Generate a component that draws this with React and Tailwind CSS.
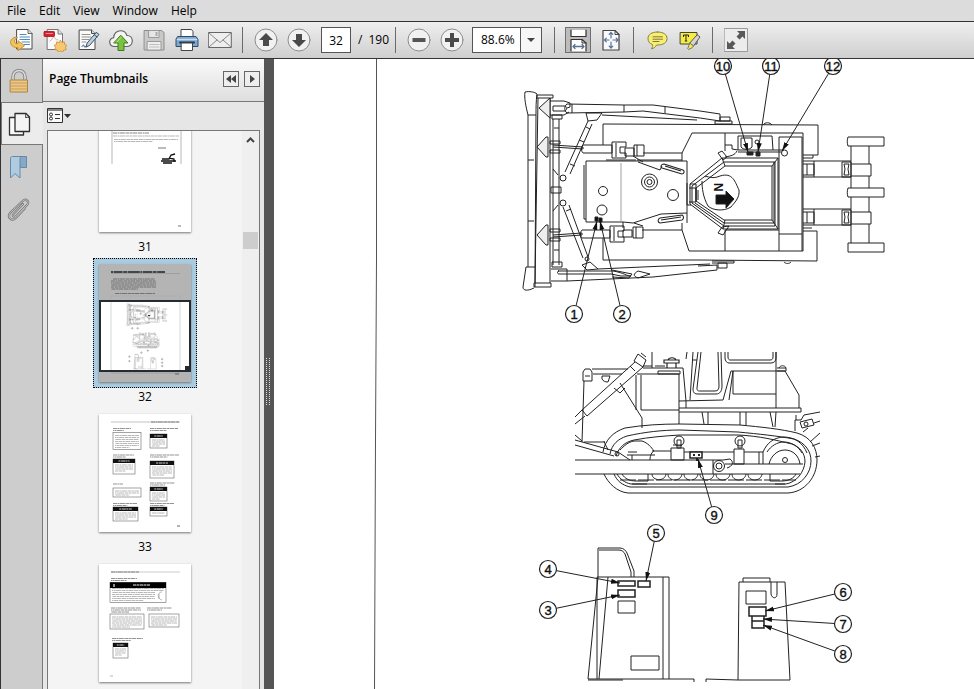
import { useState } from "react";

const MENUS = ["File", "Edit", "View", "Window", "Help"];

const Icon = ({ children, className = "h-6 w-6" }) => (
  <svg viewBox="0 0 24 24" className={className} fill="none" strokeLinecap="round" strokeLinejoin="round" aria-hidden="true">
    {children}
  </svg>
);

const OpenIcon = () => (
  <Icon>
    <path d="M7 1.500h11l4 4v15.500H7z" fill="#fff" stroke="#4b4b4b" />
    <path d="M18 1.500v4h4" fill="#ddd" stroke="#4b4b4b" strokeWidth=".8" />
    <path d="M10 6.500h6M10 9h9.500M10 11.500h9.500M12 14h7.500M14 16.500h5.500" stroke="#4a8db8" strokeWidth="1.200" />
    <path d="M6.500 9C2 9.500 0 12.500.7 15.500c.7 3 4.300 4.300 7.300 4.200v3l6.500-5-6.500-5v3c-2 0-3.600-.6-3.600-2.400 0-1.500 1-2.800 2.600-3.300z" fill="#f5c35b" stroke="#b98324" strokeWidth=".8" />
  </Icon>
);

const CreateIcon = () => (
  <Icon>
    <path d="M4.500 1.500H15l4.500 4.500v15.500h-15z" fill="#fafafa" stroke="#777" />
    <path d="M15 1.500V6h4.500" fill="#ddd" stroke="#777" />
    <path d="M7 13c2-1 3-3 3.500-5 1 2 2 4 4.500 4" stroke="#d9a9a9" />
    <rect x="1" y="3.500" width="10.500" height="5" rx=".8" fill="#d8202f" stroke="#9c1420" strokeWidth=".8" />
    <path d="M3 5.500h6.500" stroke="#f28a92" />
    <path d="m17.500 12.500 1.500 2 2.400-.6.200 2.400 2.200 1-1.300 2.100.7 2.300-2.500.3-1 2.200-2.200-1.200-2.200 1.200-1-2.200-2.500-.3.700-2.300-1.300-2.100 2.300-1 .1-2.400 2.400.6z" fill="#f5c871" stroke="#c48f35" strokeWidth=".8" />
  </Icon>
);

const SignIcon = () => (
  <Icon>
    <path d="M3.500 2h12l3.500 3.500v16H3.500z" fill="#fafafa" stroke="#4b4b4b" />
    <path d="M15.500 2v3.500H19" fill="#ddd" stroke="#4b4b4b" />
    <path d="M6 6.500h8M6 9h9M6 11.500h7M6 14h4" stroke="#888" strokeWidth=".9" />
    <path d="M6 18.500c1-2 2-2 2-.5s1.500 1 3 .5" stroke="#335b86" />
    <path d="m20.500 4.500 2.500 2-9.500 11-3.500 1.500 1-3.500z" fill="#bcd0e2" stroke="#3c4f62" />
    <path d="m18.500 7 2.500 2" stroke="#3c4f62" />
  </Icon>
);

const CloudIcon = () => (
  <Icon>
    <path d="M6 18.500C2.500 18.500.7 16.500.7 14c0-2.300 1.700-4 4-4.300C4.700 5.500 7.700 2.700 11.500 2.700c3.200 0 5.600 1.900 6.400 4.800 3 0 5.400 2.200 5.400 5.300 0 3.200-2.200 5.700-5.300 5.700z" fill="#f4f4f4" stroke="#5c5c5c" strokeWidth="1.100" />
    <path d="M12 7.500 19 15h-4v7.500H9V15H5z" fill="#7cc242" stroke="#3f7d1c" />
    <path d="M12 9.500 8 14" stroke="#b9e38f" />
  </Icon>
);

const SaveIcon = () => (
  <Icon>
    <path d="M2.500 2.500h17l2.500 2v17.500H2.500z" fill="#c9c9c9" stroke="#8b8b8b" />
    <path d="M7 2.500h10v7H7z" fill="#e6e6e6" stroke="#999" />
    <path d="M13.500 4h2v4h-2z" fill="#aaa" />
    <path d="M5.500 13.500h13.500V22H5.500z" fill="#efefef" stroke="#999" />
    <path d="M7.500 16.500h9.500M7.500 19h9.500" stroke="#bdbdbd" />
  </Icon>
);

const PrintIcon = () => (
  <Icon>
    <path d="M6 9V1.500h10.500l1.500 2V9z" fill="#fff" stroke="#444" />
    <path d="M3 8.500h18l2 3v7H1v-7z" fill="#7fa8cf" stroke="#2f4d6b" />
    <path d="M2.500 11.500h19" stroke="#c7dcef" strokeWidth="1.500" />
    <path d="M5 14.500h14" stroke="#24384c" strokeWidth="2" />
    <path d="M6.500 15h11v7.500h-11z" fill="#fff" stroke="#444" />
  </Icon>
);

const MailIcon = () => (
  <Icon>
    <path d="M.7 4.500h22.600v15H.7z" fill="#eee" stroke="#666" />
    <path d="m1 5 11 9.500L23 5M1 19l8-7M23 19l-8-7" stroke="#888" />
  </Icon>
);

const RoundIcon = ({ children }) => (
  <Icon>
    <circle cx="12" cy="12" r="11" fill="#f1f1f1" stroke="#8d8d8d" />
    {children}
  </Icon>
);

const FitWidthIcon = () => (
  <Icon>
    <path d="M5 2v6.500h15V2" fill="#fff" stroke="#333" strokeWidth="1.200" />
    <path d="M5 23V11.500h11L20 15v8" fill="#fff" stroke="#333" strokeWidth="1.200" />
    <path d="M16 11.500V15h4" stroke="#333" />
    <path d="M7 18.500h11M9 16.500l-2 2 2 2M16 16.500l2 2-2 2" stroke="#5b7193" strokeWidth="1.300" />
  </Icon>
);

const FitPageIcon = () => (
  <Icon>
    <path d="M4 2.500h12l4 4v15.500H4z" fill="#f7f9fc" stroke="#444" strokeWidth="1.200" />
    <path d="M16 2.500v4h4" stroke="#444" />
    <path d="M12 4.500V10M12 14v6M5.500 12H10M14 12h5M10.200 6.300 12 4.500l1.800 1.800M10.200 18.200 12 20l1.800-1.800M7.300 10.200 5.500 12l1.800 1.800M17.200 10.200 19 12l-1.800 1.800" stroke="#5b7193" strokeWidth="1.200" />
  </Icon>
);

const CommentIcon = () => (
  <Icon>
    <path d="M12.500 4c6 0 9.500 2.500 9.500 6.500S18.500 17 12.500 17l-1 0c-1 2-2.500 3.300-5 3.800 1-1.300 1.300-2.800 1-4.300C4.500 15.500 3 13.500 3 10.500 3 6.500 6.500 4 12.500 4z" fill="#f8ef72" stroke="#85803f" />
    <path d="M8 8.800h9.500M8 11.200h9.500M8 13.500h6" stroke="#6e6a35" strokeWidth=".9" />
  </Icon>
);

const HighlightIcon = () => (
  <Icon>
    <path d="M2.500 4.500H19V16H2.500z" fill="#f7ed3f" stroke="#444" />
    <path d="M5.500 9V7h5v2M8 7v6M6.800 13h2.400" stroke="#222" strokeLinecap="butt" />
    <path d="m19.500 7 2.500 2-6.500 9-3.500-2.700z" fill="#d4d4d4" stroke="#555" />
    <path d="m12 15.300 3.500 2.700-1.500 1.800-3.500 1.700-.5-.5z" fill="#f7ed3f" stroke="#777" />
  </Icon>
);

const ExpandIcon = () => (
  <Icon>
    <path d="M.5.500h23v23H.5z" fill="#ececec" stroke="#9a9a9a" />
    <path d="M21 3v8l-2.500-2.500-3 3-3-3 3-3L13 3zM3 21v-8l2.500 2.500 3-3 3 3-3 3L11 21z" fill="#585858" />
  </Icon>
);

const LockIcon = () => (
  <Icon>
    <path d="M6 12V7.500a6 6 0 0 1 12 0V12" stroke="#858585" strokeWidth="3.400" strokeLinecap="butt" />
    <path d="M6 12V7.500a6 6 0 0 1 12 0V12" stroke="#dcdcdc" strokeWidth="1.600" strokeLinecap="butt" />
    <path d="M3.500 11h17v12h-17z" fill="#ecc886" stroke="#a88345" />
    <path d="M4 14h16M4 17h16M4 20h16" stroke="#c89c55" />
  </Icon>
);

const PagesIcon = () => (
  <Icon>
    <path d="M1.500 5.500h14V23h-14z" fill="#fafafa" stroke="#2f2f2f" strokeWidth="1.300" />
    <path d="M7 1.500h11l3.500 3.500v14.500H7z" fill="#f4f4f4" stroke="#2f2f2f" strokeWidth="1.300" />
    <path d="M17.500 1.500c.5 2 0 3 0 4 1-.4 2.500-.4 4 0" stroke="#2f2f2f" />
  </Icon>
);

const BookmarkIcon = () => (
  <Icon>
    <path d="M12 1.500h7.500v11H14z" fill="#86a9c7" stroke="#6889a6" />
    <path d="M14.500 1.500H5.500c-1.500 0-2 .7-2 2V23L8 18.500l5 4.500V4c0-1.500.5-2.500 1.500-2.500z" fill="#afcbe1" stroke="#6889a6" />
  </Icon>
);

const ClipIcon = () => (
  <Icon>
    <path d="M16 6 6.500 16c-1.700 2 .8 4 2.500 2.300L20 7c3-3.500-1-7-4.300-4L3.500 14.500c-4 4.500 1 9.500 5.300 5.500l9-9.500" stroke="#777" strokeWidth="2.200" />
    <path d="M16 6 6.500 16c-1.700 2 .8 4 2.500 2.300L20 7c3-3.500-1-7-4.300-4L3.500 14.500c-4 4.500 1 9.500 5.300 5.500l9-9.500" stroke="#d5d5d5" strokeWidth=".8" />
  </Icon>
);

const FILE_TOOLS = [
  { label: "Open", icon: OpenIcon },
  { label: "Create", icon: CreateIcon },
  { label: "Sign", icon: SignIcon },
  { label: "Upload", icon: CloudIcon },
  { label: "Save", icon: SaveIcon },
  { label: "Print", icon: PrintIcon },
  { label: "Email", icon: MailIcon },
];

const ToolButton = ({ label, active, onClick, children }) => (
  <button type="button" aria-label={label} onClick={onClick} className="flex h-7 w-[33px] shrink-0 items-center justify-center">
    <span className={active ? "border border-[#6f6f6f] bg-[#bcbcbc]" : ""}>{children}</span>
  </button>
);

const Separator = () => <div className="mx-1.5 h-[26px] w-px shrink-0 bg-[#6a6a6a]" />;

const Toolbar = ({ page, setPage }) => {
  const [fit, setFit] = useState("width");

  return (
    <div className="flex h-[38px] shrink-0 items-center border-y border-[#333] bg-linear-to-b from-[#efefef] to-[#cfcfcf] pl-[5px]">
      {FILE_TOOLS.map(({ label, icon: ToolIcon }) => (
        <ToolButton key={label} label={label}>
          <ToolIcon />
        </ToolButton>
      ))}
      <Separator />
      <ToolButton label="Previous page" onClick={() => setPage(Math.max(1, page - 1))}>
        <RoundIcon>
          <path d="m12 5 7 7h-4v6H9v-6H5z" fill="#4a4a4a" />
        </RoundIcon>
      </ToolButton>
      <ToolButton label="Next page" onClick={() => setPage(Math.min(190, page + 1))}>
        <RoundIcon>
          <path d="m12 19 7-7h-4V6H9v6H5z" fill="#4a4a4a" />
        </RoundIcon>
      </ToolButton>
      <input
        aria-label="Page number"
        value={page}
        onChange={e => setPage(Number(e.target.value) || 1)}
        className="ml-1.5 h-[26px] w-[30px] shrink-0 border border-[#555] bg-white text-center"
      />
      <span className="flex w-[38px] shrink-0 justify-between pl-[7px]">
        <span>/</span>
        <span>190</span>
      </span>
      <Separator />
      <ToolButton label="Zoom out">
        <RoundIcon>
          <path d="M5.500 10h13v4h-13z" fill="#555" />
        </RoundIcon>
      </ToolButton>
      <ToolButton label="Zoom in">
        <RoundIcon>
          <path d="M10 5h4v5h5v4h-5v5h-4v-5H5v-4h5z" fill="#4a4a4a" />
        </RoundIcon>
      </ToolButton>
      <div className="relative mr-1.5 ml-1 h-[26px] w-[70px] shrink-0 border border-[#555] bg-white">
        <select aria-label="Zoom level" defaultValue="88.6%" className="h-full w-full appearance-none pl-2 text-black">
          <option>50%</option>
          <option>88.6%</option>
          <option>100%</option>
        </select>
        <span className="pointer-events-none absolute inset-y-0 right-0 flex w-[21px] items-center justify-center border-l border-[#555] bg-[#f6f6f6]">
          <svg viewBox="0 0 8 4" className="h-1 w-2" aria-hidden="true">
            <path d="M0 0h8L4 4z" fill="#444" />
          </svg>
        </span>
      </div>
      <Separator />
      <ToolButton label="Fit width" active={fit === "width"} onClick={() => setFit("width")}>
        <FitWidthIcon />
      </ToolButton>
      <ToolButton label="Fit page" active={fit === "page"} onClick={() => setFit("page")}>
        <FitPageIcon />
      </ToolButton>
      <Separator />
      <ToolButton label="Add comment">
        <CommentIcon />
      </ToolButton>
      <ToolButton label="Highlight text">
        <HighlightIcon />
      </ToolButton>
      <Separator />
      <ToolButton label="Read mode">
        <ExpandIcon />
      </ToolButton>
    </div>
  );
};

const RailButton = ({ label, active, children }) => (
  <button
    type="button"
    aria-label={label}
    className={`flex h-[43px] w-full items-center pl-1.5 ${
      active ? "border-y border-l border-[#777] bg-[#ececec]" : "border-r border-[#777]"
    }`}
  >
    {children}
  </button>
);

const NavRail = () => (
  <nav className="flex w-[43px] shrink-0 flex-col border-l border-[#333] bg-[#cdcdcd]">
    <RailButton label="Security settings">
      <LockIcon />
    </RailButton>
    <RailButton label="Page thumbnails" active>
      <PagesIcon />
    </RailButton>
    <RailButton label="Bookmarks">
      <BookmarkIcon />
    </RailButton>
    <RailButton label="Attachments">
      <ClipIcon />
    </RailButton>
    <div className="flex-1 border-r border-[#777]" />
  </nav>
);

// Linework of the three machine views: plan, side elevation and the two panels
const MachineLines = () => (
  <>
    {/* blade */}
    <path d="M528 115c-2-8-4-17-3-23 4-1 10 0 12 2-1 7-1 14-1 21zM528 115v152M536 115l-1 172M528 160h6M528 221h6M526 267h9M526 267l-3 20c0 4 5 4 11 1" />
    <path d="M537 95h16v3h-16zM538 98l-3 185M550 98v185M534 283h17v4h-17z" />
    <path d="m539 108 11-10v20zM537 147l9-10h2v20h-2zM537 235l9-10h2v20h-2z" fill="#eee" />
    <path d="M553 119v146M559 119v146M552 115h10v4h-10zM552 262h10v5h-10zM551 187h10v6h-10zM553 169l5 6M553 211l5-6M554 128h5M554 250h5" />
    <path d="M550 101h14l6 2v4l-3 1M550 115h14l5-3M553 106h12c2 1 2 4 0 5h-12zM550 141h10v3h-10zM550 150h10v3h-10zM550 229h10v3h-10zM550 238h10v3h-10z" />
    {/* lift arms */}
    <path d="m567 104 57 1 29 0 47 6 20 3v7l-20-3-57-7-19 1-57 1c-3-2-3-7 0-9M624 105v7M665 107v6M602 115l95 5M720 117h10v4h-10zM715 121h17v3h-17zM572 104v9" />
    <path d="M586 113h16l-5 7-9 1zM588 121l-23 51M592 124l-22 50M586 127l4 2M570 164l5 2M579 140l5 2" />
    <circle cx="563" cy="178" r="3" />
    <circle cx="563" cy="203" r="3" />
    <path d="m563 207 20 51M569 205l19 52M566 211l5-2M582 265l8-3 8 7-11 1z" />
    <circle cx="587" cy="259" r="2" />
    <path d="M551 269h16v12h-16M598 269l112-5M567 281l86-4 64-7v-5l-19 1M558 271h55c12 2 13 5 18 5h-10l-10-2h-52c-2 0-2-3 0-3zM612 270l20 4-3 4-17-1M638 271l12 3-12 4c-5-2-5-4 0-7zM718 263h9v5h-9zM712 261h22v2h-22" />
    {/* cylinders */}
    <path d="m553 145 30 2v2l-30-2M583 145h29v8h-29c-2-2-2-6 0-8zM612 142h14v5h-6v6h6v5h-14zM616 143v14M625 148h9v8h-9zM634 145h10v11h-10zM637 145v11" />
    <path d="m553 235 29-2v2l-29 2M582 230h28v8h-28c-2-2-2-6 0-8zM610 226h14v5h-6v6h6v5h-14zM614 227v14M623 230h9v7h-9zM633 227h10v11h-10zM636 227v11" />
    {/* track frames */}
    <path d="M603 145v-21l215 1v30h-15M692 133h111M692 133l-10 20h-39M637 160h45M682 153v8M603 238v22h97l117 1v-30h-14M682 223v7l7 21h114M642 230h40M763 125c2-3 7-3 9 0M784 262c2 2 5 2 7 0M803 133v118M813 155v3h-10M812 228h-9" />
    {/* hood */}
    <path d="M586 161h101v62M586 161v61h37M584 165v54h2M623 222l10 1 28-9 26-1M638 162l22 8 2-4M606 160h30M633 156l10 6M623 222v6M634 223l9 3" />
    <path d="M621 163v58" stroke="#777" strokeWidth=".7" />
    <path d="m664 164 19 6c2 1 1 4-1 4l-20-6c-2-1-1-4 2-4zM665 166l16 5M660 218l22-3c2 1 2 4 0 5l-22 3c-3-1-2-4 0-5zM661 220l20-3" strokeWidth="1.100" />
    <circle cx="649.500" cy="182" r="8" />
    <circle cx="649.500" cy="182" r="5" />
    <circle cx="649.500" cy="182" r="2.500" />
    <circle cx="603" cy="191" r="4.500" />
    <circle cx="602" cy="210" r="5" />
    <circle cx="673" cy="195" r="5.500" />
    <path d="M595 217h3v4h-3zM599 218h3v4h-3z" fill="#111" />
    {/* cab */}
    <path d="M690 184v20l33 25h55v-71h-56zM692 186v17l32 23h51v-64h-51zM696 188v13l28 19h48v-54h-47zM698 190v10M690 184h6v18M722 158l3 8M778 158l-6 8M778 229l-6-9M723 229l2-9M774 162v61h-50l-29-20" />
    <path d="M687 183v22h4M689 188h7v14h-7M718 153l4-2 5 6-4 3zM718 233l4-6 7-1-6 9z" />
    <path d="M725 133v18M725 145h7v4l6 1M738 150v-14h34l1 14M738 150h46M738 152h44M725 157c6-1 10-2 12-6M741 138h11v9c-2 3-9 3-11 0z" />
    <circle cx="757" cy="142" r="2" />
    <circle cx="784.500" cy="153" r="3" fill="#fff" />
    <path d="M747 152h6v3h-6zM756 152h4v4h-4z" fill="#222" />
    <path d="M779 251V137h23v114M779 234h23M725 230h54M725 230v21M705 177c2-2 6 3 15-1 13-4 15 6 19 14 1 8-5 13-8 17-8 5-19 3-23-1-5-9-6-18-6-25" />
    <path d="M716 195h10v-4l8 8-8 9v-4h-10z" fill="#111" />
    {/* ripper */}
    <path d="M803 161h48M803 177h48M803 209h48M803 225h48M803 164h11v11h-11M814 161v16M807 164v11M803 212h11v11h-11M814 209v16M807 212v11M842 162h9v15h-9zM842 210h9v15h-9zM844 164h5l-1 5 1 6h-5l1-6zM844 212h5l-1 5 1 6h-5l1-6z" />
    <path d="M848 137h36v9h-36c-1-3-1-6 0-9zM848 188h36v9h-36c-1-3-1-6 0-9zM848 243h36v9h-36zM851 146v18M869 146v18M851 164h20v12h-20zM851 176v12M869 176v12M851 197v15M869 197v15M851 212h20v12h-20zM851 224v19M869 224v19" />
    {/* side elevation: hood and cylinder */}
    <path d="m638 354 8 6-3 7-9-6zM635 362l-53 48 5 6 56-49M641 353l5 4M582 410l-7 7M585 416l-10 8M630 366l5 5" />
    <path d="M583 372v9h9v-9l-2-3h-5zM584 381l-2 61M592 369h36M593 374h29M585 376h5M602 376h8l-2 6c-3 0-5-1-6-3zM614 388l6 5 5-5M643 368h40l3 33M637 374h42M658 371h22v3h-22zM652 352v16M643 366h9M636 375v35M641 375v35M641 410h38M620 383l22 35v10M584 442h20" />
    <path d="M664 360h15v3h-15zM668 360c1-3 7-3 8 0M667 363v5M676 363v5M655 366h10" strokeWidth="1.200" />
    {/* side elevation: cab and deck */}
    <path d="M698 352l-5 37c0 4 2 5 5 5h18c4 0 6-3 6-8l-1-34M701 352l-4 36c0 3 1 3 3 3h15c3 0 4-2 4-5l-1-34M693 352l-3 48M692 360h5M687 352l-1 7" />
    <path d="M725 352v6c0 3 2 5 4 5h42c3 0 5-2 5-5v-6M728 352v5c0 2 1 3 2 3h40c2 0 3-1 3-3v-5M776 352v56" />
    <path d="M679 374v50M679 401l44-1 8-29h54l14 24v13M733 371l-4 29M733 371v23h43M679 408h122v4H679M686 401v7M777 368h9v3h-9M779 368c1-3 6-3 7 0M702 412l2 12M708 412v12M740 412v13M746 412v13M770 412l3 15M776 412l-1 15" />
    {/* crawler track */}
    <path d="M603 452c2-12 10-20 22-24 18-3 36-4 55-4l60 1c21 2 41 4 57 8 14 4 20 15 20 27 0 17-12 32-29 33H628c-11-1-20-10-24-19" />
    <path d="M610 454c2-10 8-15 17-18 18-4 35-6 53-6l58 2c21 2 40 4 56 7 12 4 17 13 17 22 0 12-9 24-23 26H630c-8-2-13-6-16-13M616 456c3-9 9-14 18-16 16-3 30-4 46-5M617 474c3 5 8 9 14 10h155c11-2 18-12 19-22 0-9-5-15-13-18-17-4-32-8-54-9h-58" />
    <path d="M620 480h176M632 484h15M775 484h10" strokeDasharray="16 2" />
    <path d="M575 460h138v14H575M725 464h78M713 474h87M575 435l7 6M575 440l43 12M575 445l39 11M618 452l12 8M604 441c1 4 3 6 4 9" />
    <circle cx="617" cy="454" r="2" />
    <circle cx="719" cy="466" r="5.500" />
    <circle cx="719" cy="466" r="3" />
    <path d="M713 460h10l7-1c4 3 3 7-3 9" />
    <path d="M652 474c0 7 13 8 14 0M668 474c0 8 13 8 14 0M684 474c0 8 13 8 14 0M700 474c0 8 13 8 14 0M716 474c0 8 13 8 14 0M732 474c0 8 13 8 14 0M748 474c0 8 13 8 14 0M622 474c3 5 8 7 14 7h12v-7M770 474v7h12c7 0 12-3 14-7" />
    <circle cx="679" cy="441" r="5" />
    <circle cx="740" cy="441" r="5" />
    <path d="M677 440h4v8h-4zM738 440h4v8h-4zM671 448h13v12h-13zM734 449h10v15h-10zM673 445h9" />
    <path d="M652 451h19M650 460c0-5 2-8 4-9M684 452h50M744 452h19v12M759 452v12M627 455h28M628 452h9M632 460v-5M620 450c4-4 8-8 14-9h8c6 2 9 6 12 10M763 452c4-9 10-14 20-15 12 0 20 6 24 16M767 452c4-6 10-10 17-10s14 4 18 11M769 464c2-8 8-14 16-14s14 6 15 14" />
    <path d="M690 452h12v6h-12z" strokeWidth="1.500" fill="#fff" />
    <path d="M693 455h2M698 455h2M697 458v3" strokeWidth="2" />
    <circle cx="785" cy="460" r="2.500" />
    <path d="M795 431v-11h6l3-5 16-3M800 422l12-3 2 6-12 3zM814 423l6-2M803 432l5-4M810 442l10-9M812 446l8-3M815 457l5-1M796 415v5" />
    <circle cx="806" cy="424" r="2" />
    {/* left panel */}
    <path d="M588 679l10-102V548h22c4 0 6 3 7 5l7 18v6M599 550h20c3 0 5 2 6 4l6 18v5M597 577h72v102M597 577v102M608 577l-9 102M663 577v102M588 679h106v3M588 680h35" />
    <path d="M618 581h17v5h-17zM638 581h12v6h-12zM618 590h17v7h-17z" strokeWidth="1.500" />
    <path d="M618 601h17v12h-17zM631 656h28v14h-28z" />
    {/* right panel */}
    <path d="M706 682v-3l32 1 1-98h46l5 98h-52M743 582v-4h27v4M771 582v12c1 5 6 5 6 0v-12M746 591h20v13h-20z" />
    <path d="M749 607h17v9h-17zM752 616h12v5h-12zM752 621h12v7h-12z" strokeWidth="1.500" />
  </>
);

const CALLOUTS = [
  { n: 1, x: 574, y: 314, tx: 597, ty: 221 },
  { n: 2, x: 622, y: 314, tx: 600, ty: 221 },
  { n: 3, x: 548, y: 610, tx: 620, ty: 595 },
  { n: 4, x: 548, y: 569, tx: 620, ty: 583 },
  { n: 5, x: 656, y: 533, tx: 646, ty: 581 },
  { n: 6, x: 843, y: 592, tx: 765, ty: 611 },
  { n: 7, x: 843, y: 624, tx: 763, ty: 619 },
  { n: 8, x: 843, y: 654, tx: 763, ty: 625 },
  { n: 9, x: 714, y: 515, tx: 698, ty: 459 },
  { n: 10, x: 723, y: 66, tx: 748, ty: 152 },
  { n: 11, x: 771, y: 66, tx: 758, ty: 152 },
  { n: 12, x: 833, y: 66, tx: 782, ty: 151 },
];

const PageDrawing = () => (
  <svg viewBox="274 59 700 630" className="h-[630px] w-[700px] max-w-none" fill="none" stroke="#222" role="img" aria-label="Machine label positions">
    <defs>
      <marker id="arrow" viewBox="0 0 9 6" refX="9" refY="3" markerWidth="9" markerHeight="6" markerUnits="userSpaceOnUse" orient="auto">
        <path d="M0 .500 9 3 0 5.500z" fill="#111" stroke="none" />
      </marker>
    </defs>
    <path d="M376.500 59v200l-1 180-1 250" stroke="#555" />
    <MachineLines />
    {CALLOUTS.map(({ n, x, y, tx, ty }) => (
      <g key={n}>
        <line x1={x} y1={y} x2={tx} y2={ty} markerEnd="url(#arrow)" />
        <circle cx={x} cy={y} r="8.500" fill="#fff" strokeWidth="1.200" />
        <text x={x} y={y + 5} textAnchor="middle" fill="#111" stroke="#111" strokeWidth=".4" className="font-['Liberation_Sans'] text-[13px]">
          {n}
        </text>
      </g>
    ))}
    <text transform="translate(714 183) rotate(90)" fill="#111" stroke="none" className="font-['Liberation_Sans'] text-[12px] font-bold">
      N
    </text>
  </svg>
);

// Rows of tiny print on a thumbnail
const Print = ({ x, y, w, rows = 1, color = "#999" }) =>
  Array.from({ length: rows }, (_, i) => (
    <path
      key={i}
      d={`M${x} ${y + i * 2}h${i === rows - 1 && rows > 1 ? w * 0.6 : w}`}
      stroke={color}
      strokeWidth=".7"
      strokeDasharray="4 .5 2 .4 5 .6"
      strokeDashoffset={i * 3}
    />
  ));

const LabelBox = ({ x, y, w, h, head = true }) => (
  <g>
    <rect x={x} y={y} width={w} height={h} stroke="#666" strokeWidth=".6" />
    {head && <rect x={x} y={y} width={w} height="4" fill="#111" />}
    {head && <path d={`M${x + w * 0.25} ${y + 2}h${w * 0.5}`} stroke="#ccc" strokeWidth="1.200" strokeDasharray="2 .6 4 .4" />}
    <Print x={x + 2} y={y + (head ? 6 : 3)} w={w - 4} rows={Math.max(1, Math.floor((h - (head ? 6 : 3)) / 2))} />
  </g>
);

const Sheet31 = () => (
  <>
    <path d="M13 0v50M82 0v50" stroke="#999" strokeWidth=".7" />
    <Print x={14} y={19} w={36} color="#555" />
    <Print x={14} y={22} w={66} />
    <Print x={15} y={25.5} w={64} rows={2} />
    <path d="M59 34h8M79 112h3" stroke="#777" />
    <path d="M63 45h7l2-4 4-1M62 47h15M64 49h9M70 44l5 1v3" stroke="#111" strokeWidth="1.300" />
  </>
);

const Sheet32 = () => (
  <>
    <path d="M0 0h92v118H0z" fill="#b4b4b4" />
    <path d="M0 36h92v70H0z" fill="#fff" />
    <path d="M12 8h54" stroke="#222" strokeWidth="1.400" strokeDasharray="2 .6 9 .6 4 .6 12 .6" />
    <path d="M12 9.500h69M12 109h69" stroke="#888" strokeWidth=".5" />
    <Print x={14} y={15} w={42} color="#555" />
    <Print x={12} y={17} w={45} rows={5} color="#555" />
    <Print x={16} y={29.5} w={40} color="#555" />
    <path d="M12 32h69v4M12 32v74M81 36v70" stroke="#aaa" strokeWidth=".5" />
    <Print x={76} y={110} w={4} color="#444" />
    <g transform="translate(0 36) scale(.111) translate(-274 -59)" stroke="#777" strokeWidth="2">
      <MachineLines />
      {CALLOUTS.map(({ n, x, y }) => (
        <circle key={n} cx={x} cy={y} r="6" strokeWidth="5" />
      ))}
    </g>
  </>
);

const Sheet33 = () => (
  <>
    <path d="M12 8h69" stroke="#999" strokeWidth=".6" />
    <Print x={52} y={8} w={28} color="#555" />
    <Print x={14} y={14.5} w={18} rows={2} color="#666" />
    <LabelBox x={14} y={18.5} w={28} h={17} head={false} />
    <Print x={51} y={14.5} w={28} rows={2} color="#666" />
    <LabelBox x={51} y={20} w={17} h={14} />
    <Print x={14} y={41} w={21} rows={2} color="#666" />
    <LabelBox x={14} y={45} w={22} h={15} />
    <Print x={51} y={41} w={29} rows={2} color="#666" />
    <LabelBox x={51} y={47} w={24} h={17} />
    <Print x={14} y={70} w={10} color="#666" />
    <LabelBox x={14} y={74} w={28} h={9} head={false} />
    <Print x={51} y={69} w={25} rows={2} color="#666" />
    <LabelBox x={51} y={73} w={17} h={14} />
    <Print x={14} y={89.5} w={24} rows={2} color="#666" />
    <LabelBox x={14} y={93} w={25} h={14} />
    <Print x={51} y={89.5} w={24} rows={2} color="#666" />
    <LabelBox x={51} y={93} w={17} h={9} />
    <path d="M78 112h3" stroke="#666" />
  </>
);

const Sheet34 = () => (
  <>
    <path d="M12 8h69" stroke="#aaa" strokeWidth=".6" />
    <Print x={12} y={8} w={28} color="#555" />
    <Print x={12} y={14.5} w={26} rows={2} color="#666" />
    <LabelBox x={11} y={18.5} w={56} h={20} />
    <path d="M11 18.500h56v5.500H11z" fill="#000" />
    <path d="M34 21h17M15 20v3" stroke="#eee" strokeWidth="1.200" strokeDasharray="3 .5" />
    <path d="M56 27h9v10h-9z" fill="#fff" />
    <path d="M63 28c-5 0-5 7 0 8M60 30v5" stroke="#999" strokeWidth=".7" />
    <Print x={12} y={44} w={30} rows={3} color="#666" />
    <LabelBox x={11} y={50} w={34} h={15} head={false} />
    <Print x={48} y={44} w={25} rows={2} color="#666" />
    <LabelBox x={50} y={50} w={30} h={13} head={false} />
    <Print x={13} y={74.5} w={31} rows={2} color="#666" />
    <LabelBox x={14} y={79} w={15} h={15} />
    <path d="M11 112h3" stroke="#888" strokeWidth=".6" />
  </>
);

const THUMBNAILS = [
  { page: 31, sheet: Sheet31 },
  { page: 32, sheet: Sheet32 },
  { page: 33, sheet: Sheet33 },
  { page: 34, sheet: Sheet34 },
];

const Thumbnail = ({ page, selected, onSelect, sheet: SheetArt }) => (
  <button type="button" onClick={() => onSelect(page)} className="mb-0.5 flex shrink-0 flex-col items-center">
    <span className={`relative block border p-[5px] ${selected ? "border-dotted border-black bg-[#a9cce0]" : "border-transparent"}`}>
      <svg viewBox="0 0 92 118" className="h-[118px] w-[92px] bg-white shadow-[0_1px_2px_#777]" fill="none" aria-hidden="true">
        <SheetArt />
      </svg>
      {selected && (
        <span className="absolute inset-x-[5px] top-[41px] h-[72px] border-2 border-[#252b30]">
          <span className="absolute -right-0.5 -bottom-0.5 h-1.5 w-1.5 bg-[#252b30]" />
        </span>
      )}
    </span>
    <span className="leading-[18px]">{page}</span>
  </button>
);

const HeaderButton = ({ label, children }) => (
  <button type="button" aria-label={label} className="flex h-4 w-4 items-center justify-center border border-[#666] bg-[#eee]">
    <svg viewBox="0 0 12 12" className="h-3 w-3" fill="#444" aria-hidden="true">
      {children}
    </svg>
  </button>
);

const ThumbnailPanel = ({ page, setPage }) => (
  <aside className="flex w-[221px] shrink-0 flex-col bg-[#e6e6e6]">
    <div className="flex h-[43px] shrink-0 items-center gap-[5px] border-b border-[#777] bg-linear-to-b from-[#fafafa] to-[#dedede] pr-1 pb-0.5 pl-1.5">
      <h2 className="flex-1 font-['Open_Sans','Noto_Sans',sans-serif] font-semibold">Page Thumbnails</h2>
      <HeaderButton label="Collapse panel">
        <path d="M6 2v8L1 6zM11 2v8L6 6z" />
      </HeaderButton>
      <HeaderButton label="Expand panel">
        <path d="M4 2v8l5-4z" />
      </HeaderButton>
    </div>
    <div className="flex h-7 shrink-0 items-center pb-0.5 pl-1">
      <button type="button" aria-label="Options" className="flex items-center">
        <svg viewBox="0 0 24 15" className="h-[15px] w-6" fill="none" stroke="#333" aria-hidden="true">
          <path d="M.5.500h15v14H.5z" fill="#fafafa" />
          <path d="M1 2h14" stroke="#888" strokeWidth="2" />
          <circle cx="4" cy="6.500" r="1.500" />
          <circle cx="4" cy="10.500" r="1.500" />
          <path d="M8 6.500h5M8 10.500h5" />
          <path d="M17 6h7l-3.500 4z" fill="#333" stroke="none" />
        </svg>
      </button>
    </div>
    <div className="mr-1 ml-1 flex min-h-0 flex-1 border-x border-t border-[#777] bg-[#f4f4f4]">
      <div className="flex flex-1 flex-col items-center overflow-hidden">
        <div className="-mt-[23px] flex flex-col">
          {THUMBNAILS.map(item => (
            <Thumbnail key={item.page} {...item} selected={item.page === page} onSelect={setPage} />
          ))}
        </div>
      </div>
      <div className="flex w-[17px] flex-col items-center bg-[#efefef]">
        <svg viewBox="0 0 9 6" className="mt-1.5 h-1.5 w-[9px]" fill="none" stroke="#444" strokeWidth="2" aria-hidden="true">
          <path d="m1 5 3.500-3.500L8 5" />
        </svg>
        <div className="mt-[89px] h-[17px] w-[15px] bg-[#cdcdcd]" />
      </div>
    </div>
  </aside>
);

const Splitter = () => (
  <div className="flex w-2.5 shrink-0 items-center justify-start bg-[#555] pt-4 pl-0.5">
    <svg viewBox="0 0 4 48" className="h-12 w-1" aria-hidden="true">
      <path d="M.5 0v48M3.500 0v48" stroke="#ddd" strokeDasharray="1 1" />
    </svg>
  </div>
);

export default function App() {
  const [page, setPage] = useState(32);

  return (
    <div className="flex h-screen flex-col overflow-hidden bg-[#dcdcdc] font-['Open_Sans','Noto_Sans',sans-serif] text-[12px] text-black">
      <div className="flex h-[21px] shrink-0 items-center gap-[13px] pl-[7px]">
        {MENUS.map(menu => (
          <button key={menu} type="button">
            {menu}
          </button>
        ))}
      </div>
      <Toolbar page={page} setPage={setPage} />
      <div className="flex min-h-0 flex-1">
        <NavRail />
        <ThumbnailPanel page={page} setPage={setPage} />
        <Splitter />
        <main className="min-w-0 flex-1 overflow-hidden bg-white">
          <PageDrawing />
        </main>
      </div>
    </div>
  );
}
